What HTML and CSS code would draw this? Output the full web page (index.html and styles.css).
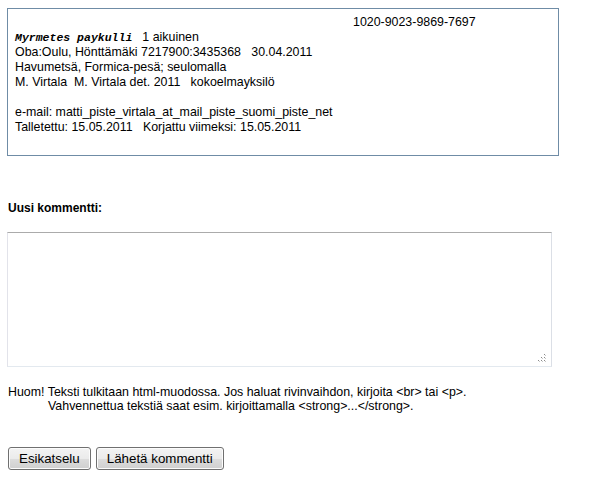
FILE: index.html
```html
<!DOCTYPE html>
<html lang="fi">
<head>
<meta charset="utf-8">
<title>Havainto</title>
<link rel="stylesheet" href="styles.css">
</head>
<body>
<div class="page">
  <div class="record">
    <div class="record-id">1020-9023-9869-7697</div>
    <div class="line"><span class="species">Myrmetes paykulli</span><span class="count">1 aikuinen</span></div>
    <div class="line">Oba:Oulu, Hönttämäki 7217900:3435368&nbsp;&nbsp; 30.04.2011</div>
    <div class="line">Havumetsä, Formica-pesä; seulomalla</div>
    <div class="line">M. Virtala&nbsp; M. Virtala det. 2011&nbsp;&nbsp; kokoelmayksilö</div>
    <div class="line">&nbsp;</div>
    <div class="line">e-mail: matti_piste_virtala_at_mail_piste_suomi_piste_net</div>
    <div class="line">Talletettu: 15.05.2011&nbsp;&nbsp; Korjattu viimeksi: 15.05.2011</div>
  </div>

  <div class="label">Uusi kommentti:</div>

  <div class="textarea-wrap">
    <textarea class="comment"></textarea>
    <svg class="grip" width="8" height="8" viewBox="0 0 8 8">
      <rect x="6" y="0" width="1" height="1" fill="#8a8a8a"/>
      <rect x="3" y="3" width="1" height="1" fill="#8a8a8a"/>
      <rect x="6" y="3" width="1" height="1" fill="#8a8a8a"/>
      <rect x="0" y="6" width="1" height="1" fill="#8a8a8a"/>
      <rect x="3" y="6" width="1" height="1" fill="#8a8a8a"/>
      <rect x="6" y="6" width="1" height="1" fill="#8a8a8a"/>
      <rect x="7" y="1" width="1" height="1" fill="#c8c8c8"/>
      <rect x="4" y="4" width="1" height="1" fill="#c8c8c8"/>
      <rect x="7" y="4" width="1" height="1" fill="#c8c8c8"/>
      <rect x="1" y="7" width="1" height="1" fill="#c8c8c8"/>
      <rect x="4" y="7" width="1" height="1" fill="#c8c8c8"/>
      <rect x="7" y="7" width="1" height="1" fill="#c8c8c8"/>
    </svg>
  </div>

  <div class="note">
    <div>Huom! Teksti tulkitaan html-muodossa. Jos haluat rivinvaihdon, kirjoita &lt;br&gt; tai &lt;p&gt;.</div>
    <div class="note-indent">Vahvennettua tekstiä saat esim. kirjoittamalla &lt;strong&gt;...&lt;/strong&gt;.</div>
  </div>

  <div class="buttons">
    <button class="btn" type="button">Esikatselu</button>
    <button class="btn" type="button">Lähetä kommentti</button>
  </div>
</div>
</body>
</html>
```

FILE: styles.css
```css
html, body {
  margin: 0;
  padding: 0;
  background: #ffffff;
}

body {
  font-family: "Liberation Sans", Arial, sans-serif;
  font-size: 12px;
  color: #000000;
}

.page {
  padding: 8px 7px 0 7px;
}

.record {
  box-sizing: border-box;
  width: 552px;
  height: 148px;
  border: 1px solid #6f8ca6;
  padding: 6px 0 0 7px;
  font-size: 12.4px;
}

.record-id {
  line-height: 15px;
  padding-left: 338px;
}

.line {
  line-height: 15px;
  white-space: nowrap;
}

.species {
  font-family: "Liberation Mono", "Courier New", monospace;
  font-style: italic;
  font-weight: bold;
  font-size: 11.5px;
  margin-right: 10px;
}

.label {
  margin: 45px 0 0 1px;
  font-weight: bold;
  line-height: 14px;
}

.textarea-wrap {
  position: relative;
  margin-top: 17px;
  width: 545px;
  height: 135px;
}

.comment {
  display: block;
  box-sizing: border-box;
  width: 545px;
  height: 135px;
  margin: 0;
  padding: 2px;
  border: 1px solid #dfe3e8;
  border-top-color: #ababab;
  border-left-color: #e2e3ea;
  border-right-color: #dbdfe6;
  border-bottom-color: #e3e9ef;
  resize: none;
  outline: none;
  background: #ffffff;
}

.grip {
  position: absolute;
  right: 6px;
  bottom: 5px;
}

.note {
  margin: 18px 0 0 1px;
  line-height: 14px;
  font-size: 12.4px;
}

.note-indent {
  padding-left: 40px;
}

.buttons {
  display: flex;
  gap: 5px;
  margin: 34px 0 0 1px;
}

.btn {
  font-family: "Liberation Sans", Arial, sans-serif;
  font-size: 13.33px;
  color: #000000;
  height: 23px;
  padding: 0 10px 1px 10px;
  border: 1px solid #707070;
  border-radius: 3px;
  background: linear-gradient(#f3f3f3 0%, #ebebeb 50%, #dddddd 51%, #cfcfcf 100%);
  box-shadow: inset 0 0 0 1px #fcfcfc;
}
```
